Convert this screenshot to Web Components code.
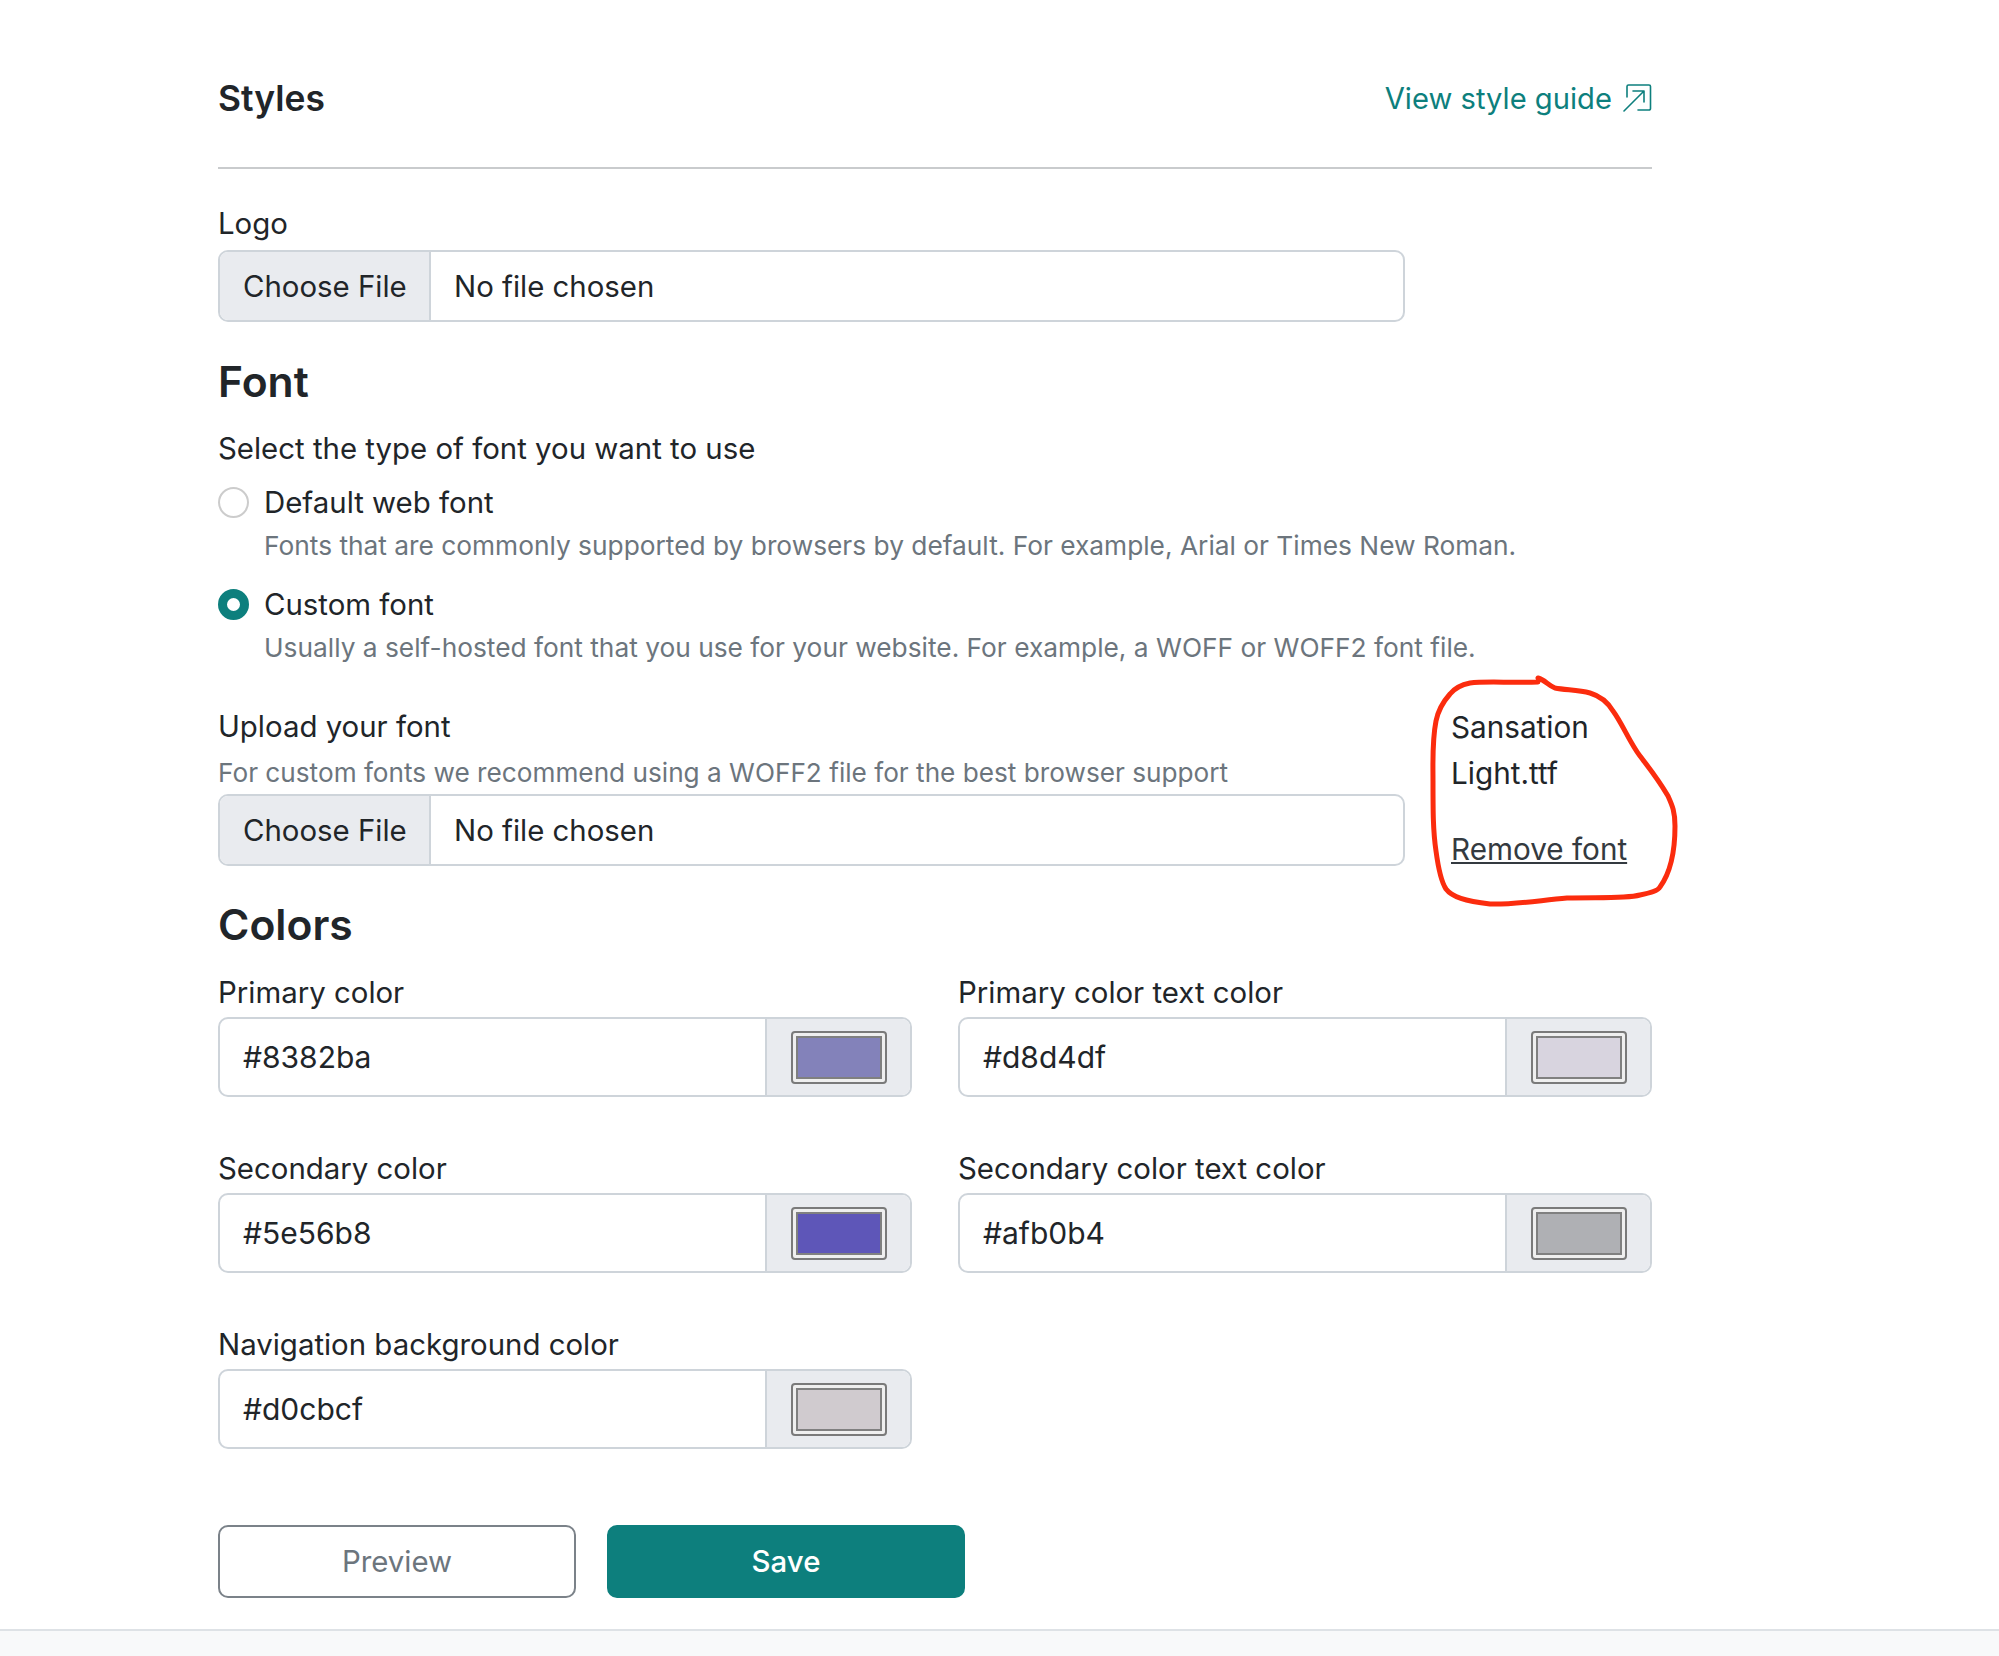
<!doctype html>
<html lang="en"><head><meta charset="utf-8"><title>Styles</title>
<style>
html,body{margin:0;padding:0;background:#fff}
body{font-family:Inter,"Liberation Sans",sans-serif;color:#212529;font-size:29.4px}
</style></head><body>
<style-page>
  <section-head title="Styles" link="View style guide"></section-head>
  <form-label style="margin-top:37px">Logo</form-label>
  <file-input></file-input>
  <big-heading style="margin-top:35px">Font</big-heading>
  <form-label style="margin-top:24px">Select the type of font you want to use</form-label>
  <radio-option label="Default web font" help="Fonts that are commonly supported by browsers by default. For example, Arial or Times New Roman." style="margin-top:16px"></radio-option>
  <radio-option checked label="Custom font" help="Usually a self-hosted font that you use for your website. For example, a WOFF or WOFF2 font file." style="margin-top:21px"></radio-option>
  <upload-row style="margin-top:43px"></upload-row>
  <big-heading style="margin-top:28px">Colors</big-heading>
  <color-grid style="margin-top:25px">
    <color-field label="Primary color" value="#8382ba"></color-field>
    <color-field label="Primary color text color" value="#d8d4df"></color-field>
    <color-field label="Secondary color" value="#5e56b8"></color-field>
    <color-field label="Secondary color text color" value="#afb0b4"></color-field>
    <color-field label="Navigation background color" value="#d0cbcf"></color-field>
  </color-grid>
  <action-bar></action-bar>
</style-page>
<script>
const base = `*{box-sizing:border-box}:host{box-sizing:border-box}`;
function def(name, render){
  customElements.define(name, class extends HTMLElement{
    connectedCallback(){
      if(this.shadowRoot) return;
      this.attachShadow({mode:'open'}).innerHTML = render(this);
    }
  });
}
def('style-page', () => `<style>${base}
  :host{display:block;min-height:1656px;background:#fff}
  main{padding:0 347px 0 218px;height:1629px;overflow:hidden}
  footer{height:27px;background:#f8f9fa;border-top:2px solid #dee2e6}
</style><main><slot></slot></main><footer></footer>`);
def('section-head', h => `<style>${base}
  :host{display:flex;justify-content:space-between;align-items:center;height:169px;border-bottom:2px solid #c9cbcd;padding:52px 0 22px}
  h2{margin:0;font-size:35.4px;font-weight:600;line-height:48px;color:#212529}
  a{display:flex;align-items:center;gap:10px;color:#0d7f7d;text-decoration:none;font-size:29.2px;line-height:48px}
  svg{display:block;margin-bottom:3px}
</style><h2>${h.getAttribute('title')}</h2><a href="#">${h.getAttribute('link')}<svg width="30" height="30" viewBox="0 0 30 30" fill="none" stroke="#0d7f7d" stroke-width="1.6" stroke-linecap="round" stroke-linejoin="round"><path d="M5 15V4.500A1.500 1.500 0 0 1 6.500 3H27a1.500 1.500 0 0 1 1.500 1.500V26.500A1.500 1.500 0 0 1 27 28H16"/><path d="M2 29L22 9M11 9H22V20"/></svg></a>`);
def('form-label', () => `<style>:host{display:block;font-size:29.4px;line-height:36px;color:#212529}</style><slot></slot>`);
def('big-heading', () => `<style>:host{display:block;font-size:42.6px;font-weight:600;line-height:50px;color:#212529}</style><slot></slot>`);
def('file-input', () => `<style>${base}
  :host{display:flex;width:1187px;height:72px;margin-top:8px;border:2px solid #ced4da;border-radius:10px;overflow:hidden;font-size:29.4px;color:#212529;background:#fff}
  b{font-weight:400;display:flex;align-items:center;width:211px;padding-left:23px;background:#e9ebef;border-right:2px solid #ced4da}
  span{display:flex;align-items:center;padding-left:23px}
</style><b>Choose File</b><span>No file chosen</span>`);
def('radio-option', h => {
  const on = h.hasAttribute('checked');
  return `<style>${base}
  :host{display:grid;grid-template-columns:46px 1fr;align-items:start;font-size:29.4px}
  i{display:block;width:31px;height:31px;margin-top:4px;border-radius:50%;${on?'border:9.5px solid #0d7f7d;background:#fff':'border:2px solid #ccc;background:#fff'}}
  span{line-height:40px;color:#212529}
  small{grid-column:2;font-size:26.3px;line-height:36px;margin-top:5px;color:#6c757d}
</style><i></i><span>${h.getAttribute('label')}</span><small>${h.getAttribute('help')}</small>`;
});
def('upload-row', () => `<style>${base}
  :host{display:grid;grid-template-columns:1187px 1fr;column-gap:46px;position:relative}
  label{display:block;font-size:29.4px;line-height:36px;color:#212529}
  small{display:block;font-size:26.2px;line-height:36px;margin-top:10px;color:#6c757d}
  file-input{margin-top:3px}
  .r{font-size:29.7px;line-height:46px;color:#212529;margin-top:-5px}
  .r a{display:block;margin-top:30px;color:#343a40;text-decoration:underline}
  svg{position:absolute;left:1182px;top:-48px;pointer-events:none}
</style><div><label>Upload your font</label><small>For custom fonts we recommend using a WOFF2 file for the best browser support</small><file-input></file-input></div>
<div class="r">Sansation<br>Light.ttf<a href="#">Remove font</a></div>
<svg width="300" height="260" viewBox="0 0 300 260" fill="none" stroke="#fb2c0e" stroke-width="5" stroke-linecap="round" stroke-linejoin="round"><path d="M138 21C110 22 85 20 70 22C60 24 54 28 50 33C42 42 38 50 36 60C32 80 33 100 33 120C33 150 33 170 36 190C38 205 42 222 46 228C52 236 65 240 90 243C110 244 135 240 167 237C195 236 225 238 240 234C250 232 258 230 260 226C268 215 275 195 275 165C275 150 272 144 268 135C258 118 250 108 240 95C230 82 222 62 213 50C207 40 200 35 190 32C178 29 165 29 155 27C148 24 145 19 138 17"/></svg>`);
def('color-grid', () => `<style>:host{display:grid;grid-template-columns:694px 694px;column-gap:46px;row-gap:54px}</style><slot></slot>`);
def('color-field', h => `<style>${base}
  :host{display:block}
  label{display:block;font-size:29.4px;line-height:36px;color:#212529}
  .g{display:flex;height:80px;margin-top:6px;border:2px solid #ced4da;border-radius:10px;overflow:hidden;background:#fff}
  .v{flex:1;display:flex;align-items:center;padding-left:23px;font-size:30px;color:#212529}
  .a{width:145px;background:#e9ebef;border-left:2px solid #ced4da;display:flex;align-items:center;justify-content:center}
  .s{width:96px;height:53px;border:2px solid #7a7a7a;border-radius:4px;background:#efefef;padding:3px}
  .s i{display:block;width:100%;height:100%;border:2px solid #808080;background:${h.getAttribute('value')}}
</style><label>${h.getAttribute('label')}</label><div class="g"><div class="v">${h.getAttribute('value')}</div><div class="a"><div class="s"><i></i></div></div></div>`);
def('action-bar', () => `<style>${base}
  :host{display:flex;gap:31px;margin-top:76px}
  button{width:358px;height:73px;border-radius:10px;font:29.4px Inter,"Liberation Sans",sans-serif;cursor:pointer}
  .p{background:#fff;border:2px solid #7b8289;color:#6c757d}
  .s{background:#0d7f7d;border:2px solid #0d7f7d;color:#fff;font-weight:500}
</style><button class="p">Preview</button><button class="s">Save</button>`);
</script>
</body></html>
